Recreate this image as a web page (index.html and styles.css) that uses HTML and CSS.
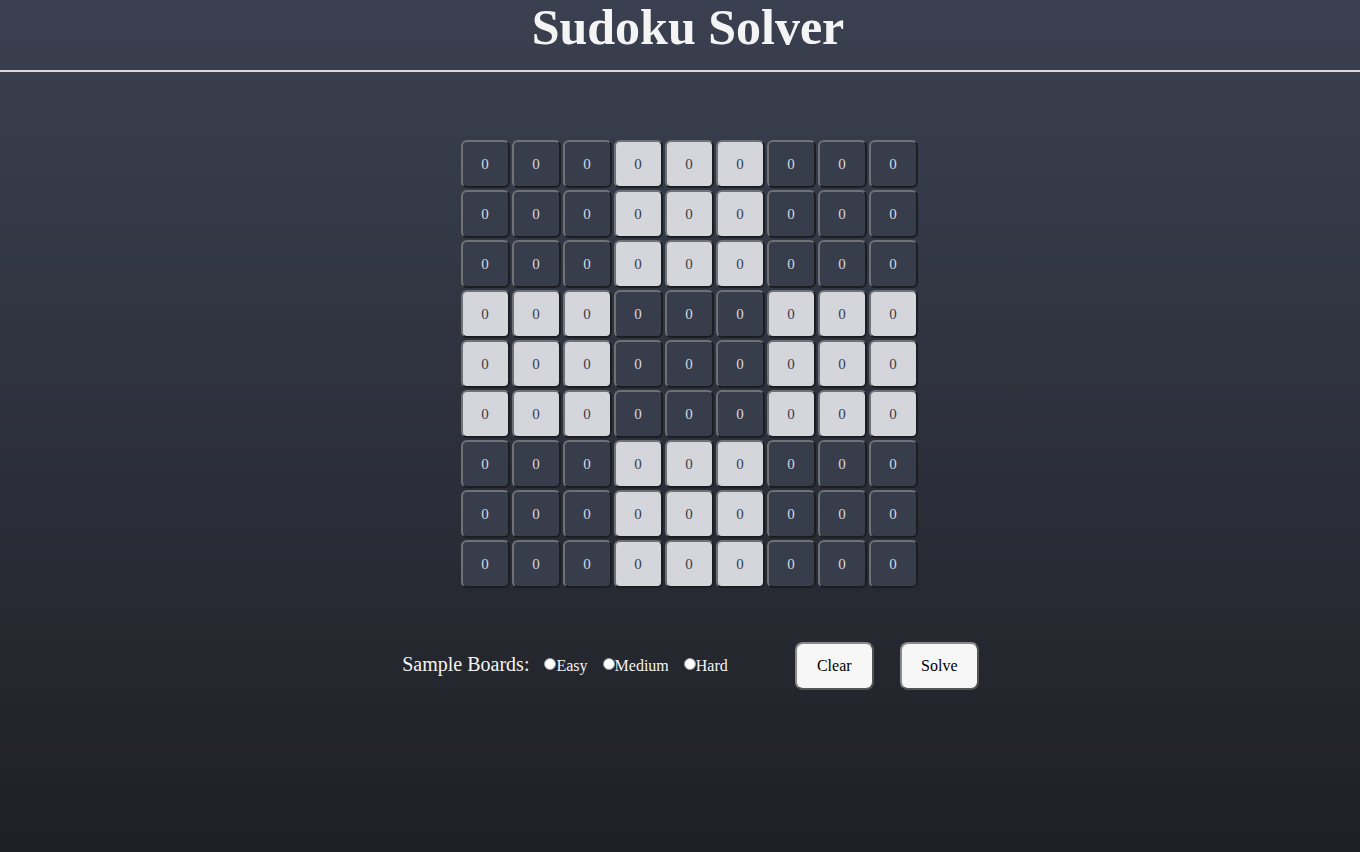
FILE: index.html
```html
<!DOCTYPE html>
<html>
<head>
<meta charset="utf-8">
<title>Sudoku Solver</title>
<link rel="stylesheet" href="styles.css">
</head>
<body>
<header class="header">
  <h1 class="title">Sudoku Solver</h1>
</header>
<main class="main">
  <div class="board-wrap">
    <div class="board" id="board"></div>
  </div>
  <div class="controls">
    <span class="samples-label">Sample Boards:</span>
    <div class="radios">
      <label class="radio"><input type="radio" name="sample" class="radio-input"><span>Easy</span></label>
      <label class="radio"><input type="radio" name="sample" class="radio-input"><span>Medium</span></label>
      <label class="radio"><input type="radio" name="sample" class="radio-input"><span>Hard</span></label>
    </div>
    <button class="btn btn-clear">Clear</button>
    <button class="btn">Solve</button>
  </div>
</main>
<script>
  var board = document.getElementById('board');
  for (var r = 0; r < 9; r++) {
    for (var c = 0; c < 9; c++) {
      var light = ((Math.floor(r / 3) + Math.floor(c / 3)) % 2) === 1;
      var d = document.createElement('div');
      d.className = 'cell ' + (light ? 'cell-light' : 'cell-dark');
      d.textContent = '0';
      board.appendChild(d);
    }
  }
</script>
</body>
</html>
```
FILE: styles.css
```css
html, body {
  margin: 0;
  padding: 0;
  height: 100%;
}
body {
  background: linear-gradient(to bottom, #3b4050 0%, #343947 25%, #2a2d37 60%, #1f2025 100%);
  font-family: "Liberation Serif", "Times New Roman", serif;
  color: #ffffff;
  min-height: 852px;
}
.header {
  height: 70px;
  border-bottom: 2px solid #d8d8d8;
  display: flex;
  justify-content: center;
  padding-left: 16px;
}
.title {
  margin: 0;
  font-size: 50px;
  line-height: 54px;
  font-weight: bold;
  color: #f4f4f4;
}
.main {
  display: flex;
  flex-direction: column;
  align-items: center;
}
.board-wrap {
  margin-top: 68px;
  padding-left: 18px;
}
.board {
  display: grid;
  grid-template-columns: repeat(9, 49px);
  grid-auto-rows: 48px;
  column-gap: 2px;
  row-gap: 2px;
}
.cell {
  box-sizing: border-box;
  border-radius: 6px;
  border-style: solid;
  border-width: 2px;
  border-color: #707176 #1c1d21 #1c1d21 #707176;
  display: flex;
  align-items: center;
  justify-content: center;
  font-size: 15px;
  font-family: "Liberation Serif", serif;
}
.cell-dark {
  background: #373d4b;
  color: #d8d8e0;
}
.cell-light {
  background: #d5d5dc;
  color: #373d4b;
}
.controls {
  margin-top: 54px;
  display: flex;
  align-items: baseline;
  padding-left: 21px;
}
.samples-label {
  font-size: 20px;
  color: #f4f4f4;
}
.radios {
  display: flex;
  align-items: baseline;
  margin-left: 15px;
  gap: 15px;
}
.radio {
  display: flex;
  align-items: baseline;
  font-size: 16px;
  color: #f4f4f4;
}
.radio-input {
  appearance: none;
  -webkit-appearance: none;
  margin: 0;
  width: 12px;
  height: 12px;
  border-radius: 50%;
  background: #ffffff;
  border: 1px solid #9a9a9a;
  box-sizing: border-box;
  position: relative;
  top: -1px;
}
.btn {
  box-sizing: border-box;
  width: 79px;
  height: 48px;
  border-radius: 8px;
  background: #f7f7f7;
  border: 2px solid #7a7a7a;
  border-color: #8a8a8a #555 #555 #8a8a8a;
  font-family: "Liberation Serif", serif;
  font-size: 16px;
  color: #000;
  margin-left: 26px;
  padding: 0;
}
.btn-clear {
  margin-left: 67px;
}
```
